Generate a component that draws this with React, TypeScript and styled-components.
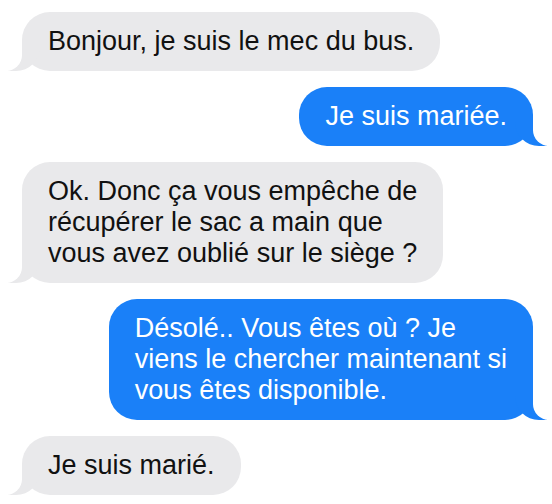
import React from "react";
import styled, { createGlobalStyle, css } from "styled-components";

interface Message {
  fromMe: boolean;
  lines: string[];
}

const messages: Message[] = [
  { fromMe: false, lines: ["Bonjour, je suis le mec du bus."] },
  { fromMe: true, lines: ["Je suis mariée."] },
  {
    fromMe: false,
    lines: [
      "Ok. Donc ça vous empêche de",
      "récupérer le sac a main que",
      "vous avez oublié sur le siège ?",
    ],
  },
  {
    fromMe: true,
    lines: [
      "Désolé.. Vous êtes où ? Je",
      "viens le chercher maintenant si",
      "vous êtes disponible.",
    ],
  },
  { fromMe: false, lines: ["Je suis marié."] },
];

const App: React.FC = () => {
  return (
    <>
      <GlobalStyle />
      <Thread>
        {messages.map((msg, i) => (
          <Bubble key={i} $fromMe={msg.fromMe}>
            {msg.lines.map((line, j) => (
              <React.Fragment key={j}>
                {j > 0 && <br />}
                {line}
              </React.Fragment>
            ))}
          </Bubble>
        ))}
      </Thread>
    </>
  );
};

const GlobalStyle = createGlobalStyle`
  html, body {
    margin: 0;
    padding: 0;
    background: #ffffff;
  }
  body {
    font-family: "Liberation Sans", Arial, sans-serif;
  }
`;

const Thread = styled.div`
  width: 552px;
  height: 504px;
  box-sizing: border-box;
  padding: 12px 19px 0 22px;
  display: flex;
  flex-direction: column;
  gap: 16px;
  background: #ffffff;
  overflow: hidden;
`;

const GRAY = "#e9e9eb";
const BLUE = "#1a80f8";

const Bubble = styled.div<{ $fromMe: boolean }>`
  position: relative;
  width: fit-content;
  padding: 14px 26px 14px 26px;
  border-radius: 28px;
  font-size: 27px;
  line-height: 31px;
  white-space: nowrap;
  background: ${(p) => (p.$fromMe ? BLUE : GRAY)};
  color: ${(p) => (p.$fromMe ? "#ffffff" : "#111111")};
  align-self: ${(p) => (p.$fromMe ? "flex-end" : "flex-start")};

  &::before,
  &::after {
    content: "";
    position: absolute;
    bottom: 0;
    height: 30px;
  }

  ${(p) =>
    p.$fromMe
      ? css`
          &::before {
            right: -14px;
            width: 32px;
            background: ${BLUE};
            border-bottom-left-radius: 24px;
          }
          &::after {
            right: -18px;
            width: 18px;
            background: #ffffff;
            border-bottom-left-radius: 16px;
          }
        `
      : css`
          &::before {
            left: -14px;
            width: 32px;
            background: ${GRAY};
            border-bottom-right-radius: 24px;
          }
          &::after {
            left: -18px;
            width: 18px;
            background: #ffffff;
            border-bottom-right-radius: 16px;
          }
        `}
`;

export default App;
